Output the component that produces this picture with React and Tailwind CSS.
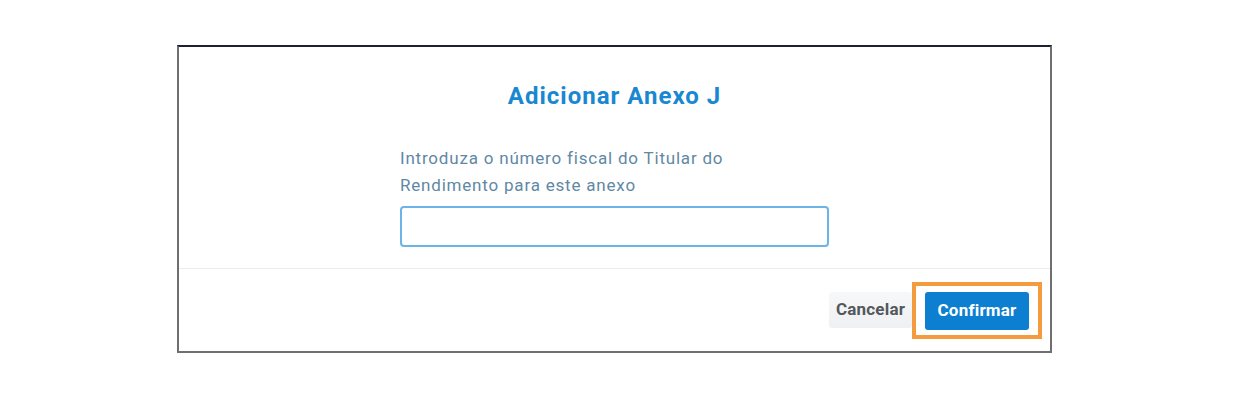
export default function App() {
  return (
    <div className="w-[1240px] h-[404px] bg-white pt-[45px] pl-[177px]" style={{ fontFamily: 'Roboto, "Liberation Sans", sans-serif' }}>
      <div className="w-[875px] h-[308px] flex flex-col border-2 border-[#6f6f6f] border-t-[#1c2231] bg-white">
        <div className="flex flex-col items-center pt-[35px] h-[221px]">
          <h1 className="text-[24px] leading-[28px] font-bold tracking-[1px] text-[#1a87d1]">Adicionar Anexo J</h1>
          <div className="w-[429px] mt-[35px]">
            <p className="text-[17px] leading-[27px] tracking-[0.8px] text-[#5f88a4] w-[400px]">
              Introduza o número fiscal do Titular do Rendimento para este anexo
            </p>
            <input
              type="text"
              className="mt-[7px] w-[429px] h-[41px] border-2 border-[#6cb4e6] rounded-[4px] outline-none px-2"
            />
          </div>
        </div>
        <div className="border-t border-[#e8edf0] flex-1 flex items-center justify-end pr-[8px]">
          <button className="w-[83px] h-[36px] rounded-[3px] bg-gradient-to-b from-[#f7f8f9] to-[#eef0f1] text-[17px] tracking-[0.2px] font-bold text-[#53585c]">
            Cancelar
          </button>
          <div className="border-4 border-[#f39b3d] pt-[6px] pb-[5px] px-[9px]">
            <button className="w-[104px] h-[38px] rounded-[3px] bg-[#0c7fd0] text-[17px] tracking-[0.2px] font-bold text-white">
              Confirmar
            </button>
          </div>
        </div>
      </div>
    </div>
  );
}
